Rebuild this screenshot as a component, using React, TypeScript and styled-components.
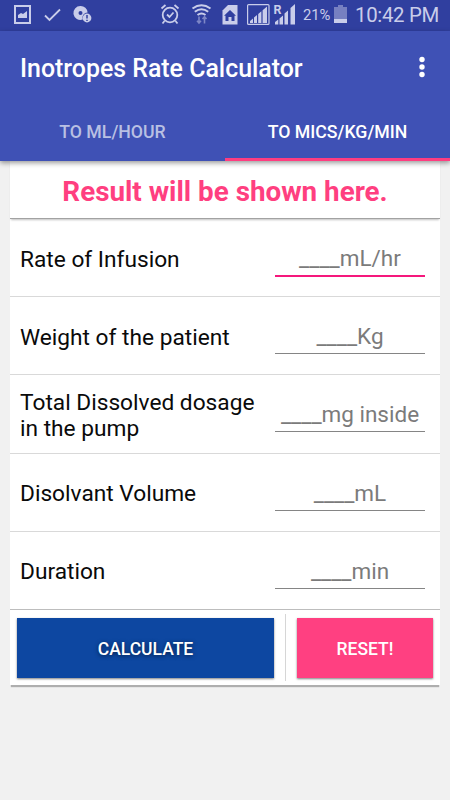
import React from 'react';
import styled, { createGlobalStyle } from 'styled-components';

const GlobalStyle = createGlobalStyle`
  * { box-sizing: border-box; }
  body {
    margin: 0;
    background: #f1f1f1;
    font-family: Roboto, "Liberation Sans", sans-serif;
  }
`;

const Screen = styled.div`
  width: 450px;
  height: 800px;
  overflow: hidden;
  background: #f1f1f1;
`;

const StatusBar = styled.div`
  height: 31px;
  background: #303f9f;
  color: #c9cdea;
  display: flex;
  align-items: center;
  justify-content: space-between;
`;

const StatusIcons = styled.svg`
  display: block;
  width: 300px;
  height: 31px;
`;

const StatusInfo = styled.div`
  display: flex;
  align-items: center;
  height: 31px;
  width: 150px;
  padding: 0 0 1px 3px;
`;

const Percent = styled.span`
  width: 31px;
  font-size: 14.8px;
  line-height: 30px;
  white-space: nowrap;
  letter-spacing: -0.1px;
`;

const Battery = styled.svg`
  display: block;
  width: 13px;
  height: 20px;
  margin-top: -2px;
`;

const Clock = styled.span`
  margin-left: 8px;
  font-size: 20.4px;
  letter-spacing: -0.3px;
  line-height: 30px;
  white-space: nowrap;
`;

const Header = styled.header`
  position: relative;
  height: 130px;
  background: #3f51b5;
  color: #fff;
  box-shadow: 0 2px 5px rgba(0, 0, 0, 0.4);
`;

const Toolbar = styled.div`
  display: flex;
  align-items: center;
  justify-content: space-between;
  height: 74px;
  padding: 0 24px 0 20px;
`;

const Title = styled.h1`
  margin: 0;
  padding-top: 2px;
  font-size: 24.9px;
  font-weight: 500;
  line-height: 30px;
  white-space: nowrap;
`;

const Overflow = styled.svg`
  display: block;
  width: 8px;
  height: 24px;
  margin-bottom: 3px;
`;

const Tabs = styled.div`
  display: flex;
  height: 56px;
`;

const Tab = styled.div<{ $active?: boolean }>`
  flex: 1;
  display: flex;
  align-items: center;
  justify-content: center;
  font-size: 17.7px;
  font-weight: 500;
  white-space: nowrap;
  color: ${(p) => (p.$active ? '#fff' : '#b9c0e3')};
  border-bottom: 3px solid ${(p) => (p.$active ? '#ff3d80' : 'transparent')};
`;

const Card = styled.main`
  width: 430px;
  margin: 0 auto;
  background: #fff;
  box-shadow: 0 3px 1px -1px rgba(0, 0, 0, 0.28);
`;

const Result = styled.div`
  height: 58px;
  padding-top: 15px;
  border-bottom: 1px solid #a2a2a2;
  box-shadow: 0 2px 2px -1px rgba(0, 0, 0, 0.25);
  color: #ff3f80;
  font-size: 27.8px;
  font-weight: 700;
  line-height: 32px;
  text-align: center;
  white-space: nowrap;
`;

const Row = styled.div<{ $last?: boolean }>`
  display: flex;
  justify-content: space-between;
  align-items: center;
  height: 78.2px;
  padding: 0 15px 0 10px;
  border-bottom: 1px solid ${(p) => (p.$last ? '#bdbdbd' : '#d9d9d9')};
`;

const Label = styled.label`
  width: 245px;
  padding-top: 4px;
  color: #0a0a0a;
  font-size: 22.7px;
  line-height: 26px;
  white-space: pre-line;
`;

const Field = styled.div<{ $focused?: boolean }>`
  width: 150px;
  height: ${(p) => (p.$focused ? 34 : 33)}px;
  margin-top: ${(p) => (p.$focused ? 5 : 4)}px;
  color: #7b7b7b;
  font-size: 22.5px;
  line-height: 30px;
  text-align: center;
  white-space: nowrap;
  border-bottom: ${(p) => (p.$focused ? '2px solid #f5187c' : '1px solid #858585')};
`;

const Actions = styled.div`
  display: flex;
  height: 75px;
  padding: 8px 7px 7px;
`;

const Button = styled.button<{ $primary?: boolean }>`
  width: ${(p) => (p.$primary ? 257 : 136)}px;
  height: 60px;
  border: 0;
  padding: 3px 0 0;
  font: 500 17.5px/24px Roboto, "Liberation Sans", sans-serif;
  color: #fff;
  background: ${(p) => (p.$primary ? '#0d47a1' : '#ff4081')};
  text-shadow: ${(p) => (p.$primary ? '0 1px 4px rgba(0, 0, 0, 0.6)' : 'none')};
  box-shadow: 0 1px 2px rgba(0, 0, 0, 0.5);
`;

const Separator = styled.div`
  width: 1px;
  height: 67px;
  margin: -4px 11px 0;
  background: #d6d6d6;
`;

const rows = [
  { label: 'Rate of Infusion', hint: '____mL/hr' },
  { label: 'Weight of the patient', hint: '____Kg' },
  { label: 'Total Dissolved dosage\nin the pump', hint: '____mg inside' },
  { label: 'Disolvant Volume', hint: '____mL' },
  { label: 'Duration', hint: '____min' },
];

const StatusGlyphs = () => (
  <StatusIcons viewBox="0 0 300 31" fill="none" stroke="#c9cdea">
    {/* picture */}
    <rect x="15" y="6" width="15" height="17" strokeWidth="2" />
    <path d="M18 18V15l3-2 2 1 4-3v7z" fill="#c9cdea" stroke="none" />
    {/* check */}
    <path d="M45 15.500l4.500 4.500L60 9.500" strokeWidth="1.800" />
    {/* disc with alert */}
    <path
      d="M80.500 6a7 7 0 1 0 2.200 13.600 5.200 5.200 0 0 1 4.900-7A7 7 0 0 0 80.500 6zm0 5a2 2 0 1 1 0 4 2 2 0 0 1 0-4z"
      fill="#c9cdea"
      fillRule="evenodd"
      stroke="none"
    />
    <circle cx="87" cy="18" r="4.400" fill="#c9cdea" stroke="none" />
    <path d="M87 15v3.600M87 19.800v1.300" stroke="#303f9f" strokeWidth="1.500" />
    {/* alarm */}
    <circle cx="170" cy="15" r="7.300" strokeWidth="1.800" />
    <path d="M167 14.500l2.500 2.500 4-4.500M161.500 8.500l4-3.500M178.500 8.500l-4-3.500M164.500 21l-2 2.500M175.500 21l2 2.500" strokeWidth="1.800" />
    {/* wifi */}
    <path d="M192.500 8.500q9-6.500 18 0M194.800 11.800q6.700-5 13.400 0M197.500 15q4-3 8 0" strokeWidth="2" />
    <path d="M199 16.500v6.500M197 20.800l2 2.300 2-2.300M204.500 23.500v-6.500M202.500 19l2-2.300 2 2.300" stroke="#7d86c6" strokeWidth="1.600" />
    {/* sim card */}
    <path d="M228 5h9.500v19.500H222.500V10.500z" fill="#c9cdea" stroke="none" />
    <path d="M230 10l6 5.700h-1.500V21h-3v-4h-3v4h-3v-5.300H224z" fill="#303f9f" stroke="none" />
    {/* signal, first line */}
    <rect x="247.600" y="4.600" width="21.400" height="19.800" rx="1" strokeWidth="1.200" />
    <path
      d="M250 23v-2l3-2.500V23zM254 23v-5.500l3-2.500v8zM258.200 23v-9l3.200-2.800V23zM262.600 23V10.200l4.400-3.700V23z"
      fill="#c9cdea"
      stroke="none"
    />
    {/* signal, roaming line */}
    <path
      d="M275 24.500v-2.500l3.300-2.600v5.100zM279.500 24.500v-6l3.500-3v9zM284.500 24.500V13.500l3.500-3v14zM290.500 24.500V8l4.500-4v20.500z"
      fill="#c9cdea"
      stroke="none"
    />
    <text x="273.500" y="14" fill="#c9cdea" stroke="none" fontFamily="Roboto, sans-serif" fontSize="12.500" fontWeight="700">
      R
    </text>
  </StatusIcons>
);

export default function App() {
  return (
    <>
      <GlobalStyle />
      <Screen>
        <StatusBar>
          <StatusGlyphs />
          <StatusInfo>
            <Percent>21%</Percent>
            <Battery viewBox="0 0 13 20">
              <path d="M4 1h5v2h4v16H0V3h4z" fill="#7780c1" />
              <path d="M0 15h13v4H0z" fill="#c9cdea" />
            </Battery>
            <Clock>10:42 PM</Clock>
          </StatusInfo>
        </StatusBar>
        <Header>
          <Toolbar>
            <Title>Inotropes Rate Calculator</Title>
            <Overflow viewBox="0 0 8 24" fill="#fff">
              <circle cx="4" cy="4.500" r="2.700" />
              <circle cx="4" cy="12" r="2.700" />
              <circle cx="4" cy="19.500" r="2.700" />
            </Overflow>
          </Toolbar>
          <Tabs>
            <Tab>TO ML/HOUR</Tab>
            <Tab $active>TO MICS/KG/MIN</Tab>
          </Tabs>
        </Header>
        <Card>
          <Result>Result will be shown here.</Result>
          {rows.map((row, i) => (
            <Row key={row.label} $last={i === rows.length - 1}>
              <Label>{row.label}</Label>
              <Field $focused={i === 0}>{row.hint}</Field>
            </Row>
          ))}
          <Actions>
            <Button $primary>CALCULATE</Button>
            <Separator />
            <Button>RESET!</Button>
          </Actions>
        </Card>
      </Screen>
    </>
  );
}
